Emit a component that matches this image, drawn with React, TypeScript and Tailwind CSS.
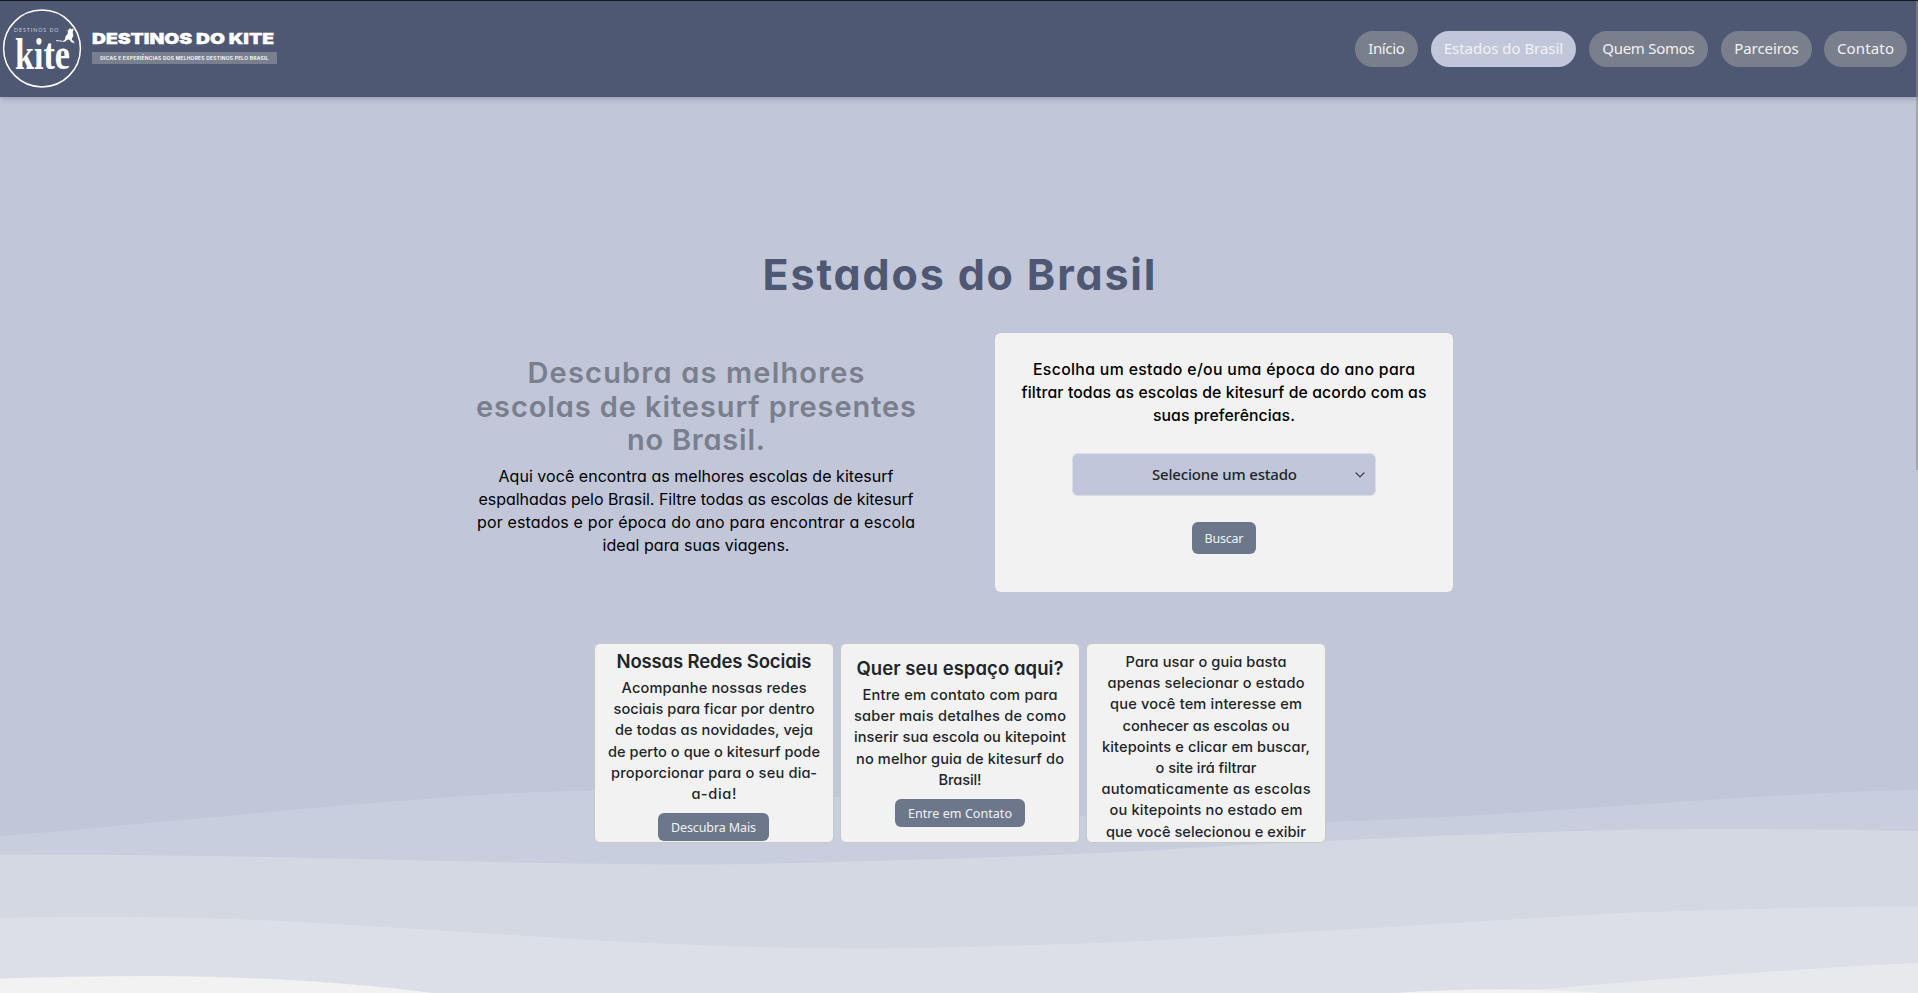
import { useLayoutEffect, useRef, useState } from "react";

/** A single line of copy tracked out to a given measure. */
function Line({ w, children }: { w: number; children: string }) {
  const ref = useRef<HTMLSpanElement>(null);
  const [tracking, setTracking] = useState(0);
  useLayoutEffect(() => {
    const el = ref.current;
    if (!el) return;
    el.style.letterSpacing = "0px";
    const natural = el.getBoundingClientRect().width;
    const next = (w - natural) / (children.length - 1);
    el.style.letterSpacing = `${next}px`;
    setTracking(next);
  }, [w, children]);
  return (
    <span className="block whitespace-nowrap">
      <span ref={ref} className="inline-block" style={{ letterSpacing: tracking, marginRight: -tracking }}>
        {children}
      </span>
    </span>
  );
}

type Row = [string, number];

function Lines({ rows }: { rows: Row[] }) {
  return (
    <>
      {rows.map(([text, w]) => (
        <Line key={text} w={w}>
          {text}
        </Line>
      ))}
    </>
  );
}

function Logo() {
  return (
    <svg width="290" height="96" viewBox="0 1 290 96" className="block shrink-0" fill="#fff">
      <circle cx="42" cy="48.5" r="38.4" fill="none" stroke="#fff" strokeWidth="1.5" />
      <text x="14" y="31.8" fontSize="5.2" textLength="44.5" fill="#c9cedb" fontFamily="Lato, sans-serif">
        DESTINOS DO
      </text>
      <text x="15" y="69" fontSize="45" fontWeight="700" textLength="55" lengthAdjust="spacingAndGlyphs" fontFamily="'Liberation Serif', serif">
        kite
      </text>
      <path d="M65.4 26l.9 3.4 1.7 1.6 1.1-2.2 1.4-.5.6 1.2 1.4-.9 1.2.8-1 2.6.6 4-1.7 3.2 1.3 1.6 1 .2-.2 1.2-2.2-.7-2.6-2-1.8.2-1.6 1.8-3.8.4 3.2-2.3.8-3.6 2-2 .2-2.4-1.4-1.6-1.2-3.8z" />
      <path d="M56 40.6l6 .5M70.5 41.4l4 1.5" stroke="#fff" strokeWidth=".9" fill="none" />
      <text x="92" y="43.6" fontSize="14.8" fontWeight="900" textLength="182" lengthAdjust="spacingAndGlyphs" stroke="#fff" strokeWidth=".35" fontFamily="Inter, sans-serif">
        DESTINOS DO KITE
      </text>
      <rect x="92" y="52" width="185" height="12" fill="#7a7f90" />
      <text x="100.3" y="59.8" fontSize="4.9" fontWeight="600" textLength="168" fontFamily="Inter, sans-serif">
        DICAS E EXPERIÊNCIAS DOS MELHORES DESTINOS PELO BRASIL
      </text>
    </svg>
  );
}

function Waves() {
  return (
    <svg width="1918" height="213" viewBox="0 780 1918 213" className="absolute bottom-0 left-0 block">
      <path fill="#c9cede" d="M0 836C70 831 130 824 200 818.5C270 812 330 806 400 801C460 796 530 791 600 790.5C680 790 760 792.500 836 797C930 803 1010 812 1082 816C1160 822 1240 824 1325 822C1380 820 1440 817.500 1497 814C1560 810 1630 805 1694 801C1770 796 1850 791 1918 790V993H0Z" />
      <path fill="#d4d8e2" d="M0 854.5C130 854.500 270 856.500 400 860C480 861.500 590 864.500 690 864.500C750 864.500 800 863 850 861.500C900 860 950 859 1000 857C1040 855.500 1070 854 1110 852.500C1180 849 1250 844 1325 841C1390 838 1450 835 1520 833C1580 830.500 1640 829 1720 829C1790 829 1850 829.500 1918 831V993H0Z" />
      <path fill="#dddfe8" d="M0 918C70 916.500 130 917 200 918C270 920 340 924 400 928C470 932 540 937 590 940C680 945 770 948.500 860 948.500C910 948.500 950 947 1000 946C1040 945 1070 944 1110 942.500C1175 939.500 1240 936 1300 932C1380 928 1450 923 1520 919C1550 917 1590 915 1620 913C1720 909.500 1820 906.500 1918 906.500V993H0Z" />
      <path fill="#e8e9ec" d="M1490 993C1560 988 1630 981.500 1694 977C1770 971.500 1850 966 1918 963V993Z" />
      <path fill="#f2f2f2" d="M0 978.5C50 977 100 976 150 976C220 976 290 979.500 340 983.5C380 986.500 405 989.500 432 993H0Z" />
      <path fill="#f2f2f2" d="M1395 993C1430 990.500 1465 989.300 1500 989.300C1535 989.300 1570 990.500 1600 993Z" />
    </svg>
  );
}

const nav: { label: string; text: number; box: string }[] = [
  { label: "Início", text: 36.5, box: "w-[63px] bg-[#7a7f8d]" },
  { label: "Estados do Brasil", text: 119.5, box: "w-[145px] bg-[#c1c7da]" },
  { label: "Quem Somos", text: 92.5, box: "w-[119px] bg-[#7a7f8d]" },
  { label: "Parceiros", text: 64.5, box: "w-[91px] bg-[#7a7f8d]" },
  { label: "Contato", text: 57, box: "-ml-px w-[83px] bg-[#7a7f8d]" },
];

const card =
  "h-[200px] w-60 overflow-hidden rounded-md border border-[#c8c8c8] bg-[#f2f2f2] text-center text-[#212529]";
const cardTitle = "text-[18.5px] leading-[22px] font-semibold";
const cardText = "text-[14.6px] leading-[21.2px] font-medium";
const button =
  "block rounded-md bg-[#6d778b] font-['Noto_Sans',sans-serif] text-[12.5px] text-[#f2f2f2]";

export default function App() {
  return (
    <div className="relative flex h-[993px] w-[1918px] flex-col overflow-hidden bg-[#c1c6d9] font-['Inter',sans-serif] [font-feature-settings:'cv11']">
      <Waves />
      <header className="relative flex h-[97px] shrink-0 items-center justify-between border-t border-[#16181d] bg-[#4f5872] pr-[11px] shadow-[0_2px_5px_rgba(60,75,100,0.3)]">
        <Logo />
        <nav className="flex gap-[13px] font-['Noto_Sans',sans-serif]">
          {nav.map((n) => (
            <a key={n.label} className={`${n.box} h-9 rounded-[18px] text-center text-[15px] leading-[34px] text-[#f2f2f2]`}>
              <Line w={n.text}>{n.label}</Line>
            </a>
          ))}
        </nav>
      </header>

      <main className="relative flex flex-col items-center">
        <h1 className="mt-[152px] text-center text-[43px] leading-[50px] font-[750] text-[#4f5872]">
          <Line w={393}>Estados do Brasil</Line>
        </h1>

        <section className="mt-[34px] flex h-[259px] w-[988px] justify-between">
          <div className="w-[462px] pt-[23px] text-center">
            <h2 className="text-[29px] leading-[33.5px] font-semibold text-[#7a7f8d]">
              <Lines rows={[["Descubra as melhores", 337], ["escolas de kitesurf presentes", 440], ["no Brasil.", 138]]} />
            </h2>
            <p className="mt-2 text-[16px] leading-[23px] text-black">
              <Lines
                rows={[
                  ["Aqui você encontra as melhores escolas de kitesurf", 395],
                  ["espalhadas pelo Brasil. Filtre todas as escolas de kitesurf", 435],
                  ["por estados e por época do ano para encontrar a escola", 438],
                  ["ideal para suas viagens.", 187],
                ]}
              />
            </p>
          </div>

          <form className="w-[458px] rounded-md bg-[#f2f2f2] pt-[25px] text-center">
            <p className="text-[15.8px] leading-[23px] font-medium text-black">
              <Lines
                rows={[
                  ["Escolha um estado e/ou uma época do ano para", 382],
                  ["filtrar todas as escolas de kitesurf de acordo com as", 405],
                  ["suas preferências.", 142],
                ]}
              />
            </p>
            <div className="mx-auto mt-[26px] flex h-[43px] w-[304px] items-center justify-end rounded-md border border-[#d8dce6] bg-[#c1c7da] pr-[10px] font-['Noto_Sans',sans-serif] text-[15px] text-[#212529]">
              <span className="mr-[58px] font-medium">
                <Line w={145}>Selecione um estado</Line>
              </span>
              <svg width="10" height="6" viewBox="0 0 10 6" fill="none" stroke="#343a40" strokeWidth="1.3" strokeLinecap="round" strokeLinejoin="round">
                <path d="M1 .9l4 4 4-4" />
              </svg>
            </div>
            <button type="button" className={`${button} mx-auto mt-[26px] h-8 w-16 leading-[31px]`}>
              <Line w={39}>Buscar</Line>
            </button>
          </form>
        </section>

        <section className="mt-[51px] flex gap-1.5 pl-[2px]">
          <article className={`${card} pt-[6px]`}>
            <h3 className={cardTitle}>
              <Line w={195}>Nossas Redes Sociais</Line>
            </h3>
            <p className={`${cardText} mt-[6px]`}>
              <Lines
                rows={[
                  ["Acompanhe nossas redes", 185],
                  ["sociais para ficar por dentro", 201],
                  ["de todas as novidades, veja", 198],
                  ["de perto o que o kitesurf pode", 212],
                  ["proporcionar para o seu dia-", 206],
                  ["a-dia!", 45],
                ]}
              />
            </p>
            <button type="button" className={`${button} mt-2 ml-[63px] h-7 w-[111px] leading-[27px]`}>
              <Line w={85}>Descubra Mais</Line>
            </button>
          </article>

          <article className={`${card} pt-[13px]`}>
            <h3 className={cardTitle}>
              <Line w={207}>Quer seu espaço aqui?</Line>
            </h3>
            <p className={`${cardText} mt-[6px]`}>
              <Lines
                rows={[
                  ["Entre em contato com para", 195],
                  ["saber mais detalhes de como", 212],
                  ["inserir sua escola ou kitepoint", 212],
                  ["no melhor guia de kitesurf do", 208],
                  ["Brasil!", 43],
                ]}
              />
            </p>
            <button type="button" className={`${button} mx-auto mt-2 h-7 w-[130px] leading-[27px]`}>
              <Line w={104}>Entre em Contato</Line>
            </button>
          </article>

          <article className={`${card} pt-2`}>
            <p className={cardText}>
              <Lines
                rows={[
                  ["Para usar o guia basta", 161],
                  ["apenas selecionar o estado", 197],
                  ["que você tem interesse em", 192],
                  ["conhecer as escolas ou", 167],
                  ["kitepoints e clicar em buscar,", 208],
                  ["o site irá filtrar", 101],
                  ["automaticamente as escolas", 209],
                  ["ou kitepoints no estado em", 193],
                  ["que você selecionou e exibir", 200],
                ]}
              />
            </p>
          </article>
        </section>
      </main>

      <div className="absolute top-px right-0 h-[469px] w-0.5 bg-[#8b8e9c]/60" />
    </div>
  );
}
